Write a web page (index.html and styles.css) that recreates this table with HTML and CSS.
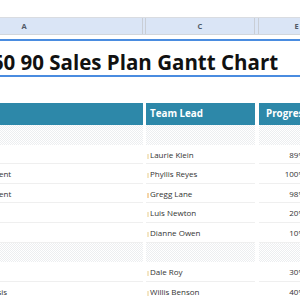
FILE: index.html
```html
<!DOCTYPE html>
<html lang="en">
<head>
  <meta charset="UTF-8">
  <title>30 60 90 Sales Plan Gantt Chart</title>
  <link rel="stylesheet" href="styles.css">
</head>
<body>
  <div class="sheet">
    <div class="colheads">
      <div class="colhead">A</div>
      <div class="colhead"></div>
      <div class="colhead">C</div>
      <div class="colhead"></div>
      <div class="colhead">E</div>
    </div>

    <div class="title">30 60 90 Sales Plan Gantt Chart</div>

    <div class="grid">
      <div class="th">Task</div><div class="gap"></div>
      <div class="th">Team Lead</div><div class="gap"></div>
      <div class="th th-progress">Progress</div>

      <div class="group"></div><div class="gap"></div>
      <div class="group"></div><div class="gap"></div>
      <div class="group"></div>

      <div class="td">Onboarding</div><div class="gap"></div>
      <div class="td lead"><span class="flag"></span>Laurie Klein</div><div class="gap"></div>
      <div class="td num">89%</div>

      <div class="td">Client's Needs Assessment</div><div class="gap"></div>
      <div class="td lead"><span class="flag"></span>Phyllis Reyes</div><div class="gap"></div>
      <div class="td num">100%</div>

      <div class="td">Sales Territory Assignment</div><div class="gap"></div>
      <div class="td lead"><span class="flag warm"></span>Gregg Lane</div><div class="gap"></div>
      <div class="td num">98%</div>

      <div class="td">Lead Review</div><div class="gap"></div>
      <div class="td lead"><span class="flag"></span>Luis Newton</div><div class="gap"></div>
      <div class="td num">20%</div>

      <div class="td">Sales Pitch</div><div class="gap"></div>
      <div class="td lead"><span class="flag"></span>Dianne Owen</div><div class="gap"></div>
      <div class="td num">10%</div>

      <div class="group"></div><div class="gap"></div>
      <div class="group"></div><div class="gap"></div>
      <div class="group"></div>

      <div class="td">Pipeline Goals</div><div class="gap"></div>
      <div class="td lead"><span class="flag"></span>Dale Roy</div><div class="gap"></div>
      <div class="td num">30%</div>

      <div class="td">Competitor Price Analysis</div><div class="gap"></div>
      <div class="td lead"><span class="flag"></span>Willis Benson</div><div class="gap"></div>
      <div class="td num">40%</div>
    </div>
  </div>
</body>
</html>
```

FILE: styles.css
```css
body {
  margin: 0;
  font-family: 'Open Sans', 'DejaVu Sans', sans-serif;
  background: #fff;
  overflow: hidden;
  width: 300px;
  height: 300px;
}
.sheet {
  margin-left: -94px;
  width: 429px;
  padding-top: 17px;
}
.colheads {
  display: grid;
  grid-template-columns: 237px 3px 109px 4px 76px;
  height: 16px;
  background: #dae5f6;
  border-top: 1px solid #d9dce1;
  border-bottom: 1px solid #d2d6dc;
}
.colhead {
  font-size: 7.5px;
  font-weight: bold;
  color: #505a68;
  text-align: center;
  line-height: 16px;
  border-right: 1px solid #c9ced6;
}
.title {
  margin-top: 4px;
  height: 34px;
  border-top: 2px solid #4a8ce0;
  border-bottom: 2px solid #4a8ce0;
  font-size: 20.5px;
  font-weight: bold;
  color: #111;
  line-height: 43px;
  padding-left: 57px;
  white-space: nowrap;
  overflow: visible;
}
.grid {
  margin-top: 26px;
  display: grid;
  grid-template-columns: 237px 3px 109px 4px 76px;
  grid-template-rows: 22px;
  grid-auto-rows: 19.6px;
}
.th {
  background: #2d88a9;
  color: #fff;
  font-weight: bold;
  font-size: 9.8px;
  line-height: 22px;
  padding-left: 4px;
  white-space: nowrap;
  overflow: hidden;
}
.th-progress {
  padding-left: 7px;
}
.group {
  background: repeating-conic-gradient(#eceef0 0 25%, #fff 0 50%) 0 0 / 2px 2px;
}
.td {
  font-size: 8px;
  color: #333;
  line-height: 19px;
  padding-left: 6px;
  border-bottom: 1px solid #efefef;
  white-space: nowrap;
}
.td.lead {
  padding-left: 1px;
}
.flag {
  display: inline-block;
  width: 2px;
  height: 5px;
  margin-right: 1px;
  vertical-align: -1px;
  background: #f4e6c4;
}
.flag.warm {
  background: #f5d5a8;
}
.td.num {
  text-align: right;
  padding-left: 0;
  padding-right: 30px;
}
.gap {
  background: #fff;
}
```
